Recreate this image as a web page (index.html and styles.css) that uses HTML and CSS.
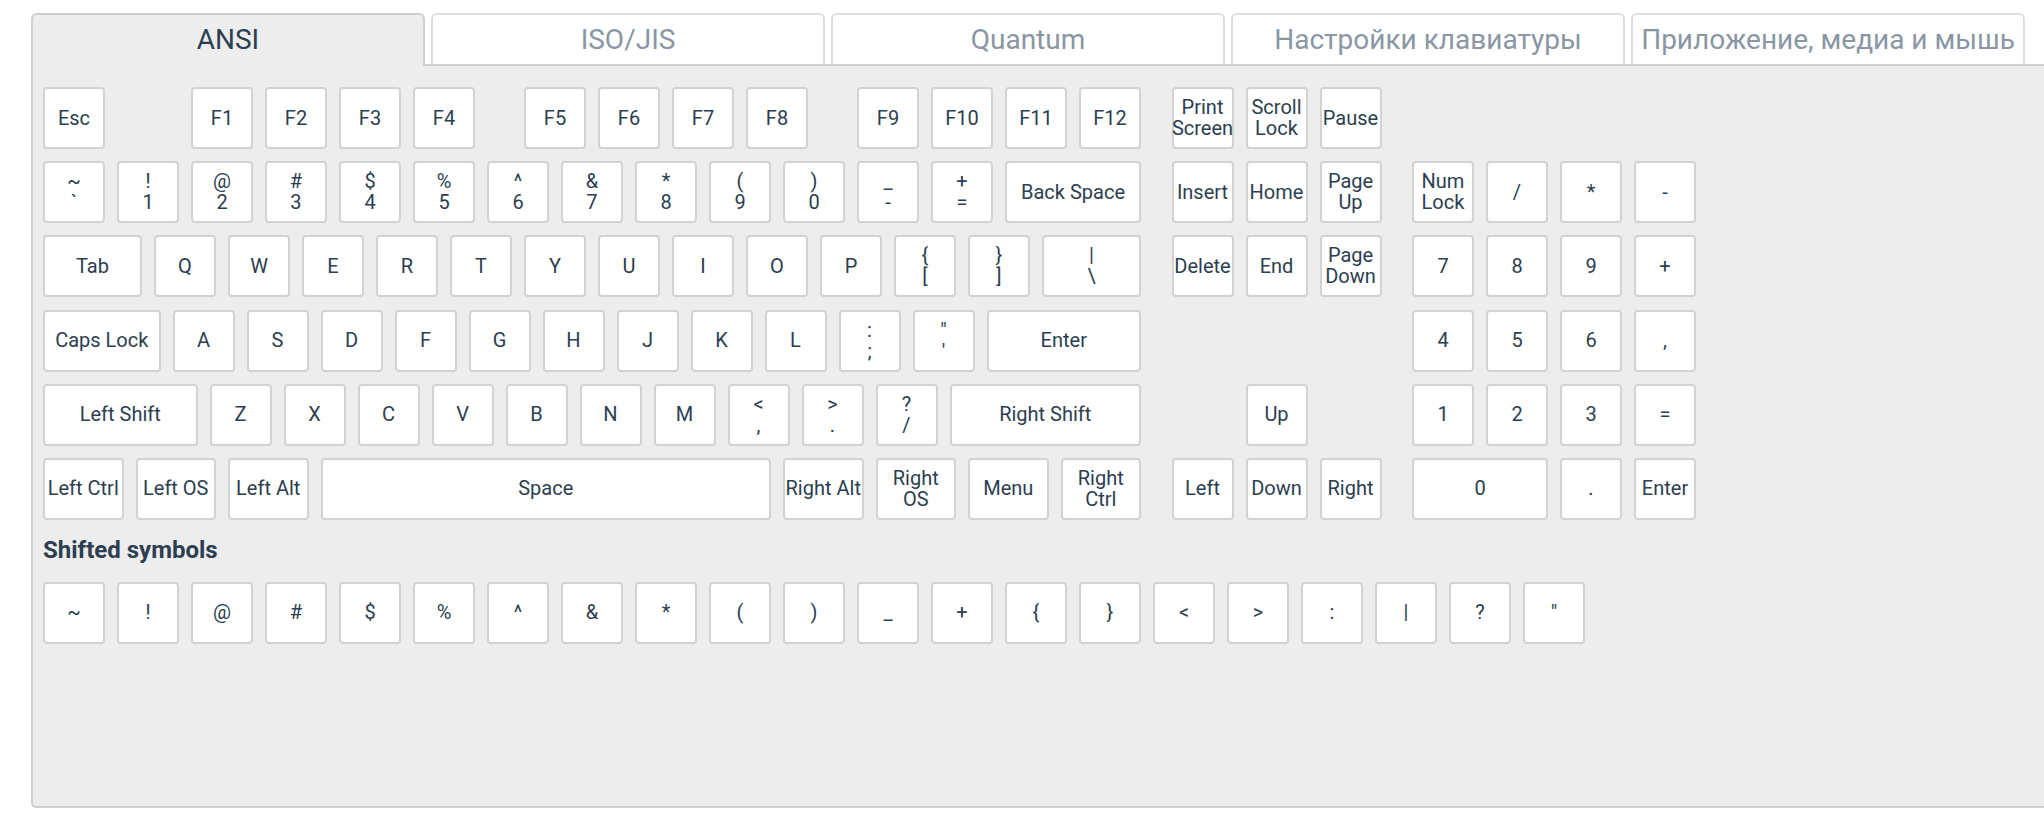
FILE: index.html
```
<!DOCTYPE html>
<html lang="en">
<head>
    <meta charset="UTF-8">
    <meta name="viewport" content="width=device-width, initial-scale=1.0">
    <title>Keycodes</title>
    <link rel="stylesheet" href="styles.css">
</head>
<body>

    <div class="keycodes">
        <!-- Tabs -->
        <div class="tabs">
            <div class="tab active">ANSI</div>
            <div class="tab">ISO/JIS</div>
            <div class="tab">Quantum</div>
            <div class="tab">Настройки клавиатуры</div>
            <div class="tab">Приложение, медиа и мышь</div>
        </div>

        <!-- Key panel -->
        <div class="panel">
            <div class="keyboard" id="keyboard">
                <!-- Rows are built from the layout below -->
            </div>

            <h3 class="section-title">Shifted symbols</h3>
            <div class="key-row" id="shifted"></div>
        </div>
    </div>

    <script>
        const UNIT = 74;
        const GAP = 12;

        // [label, x in units, width in units]
        const layout = [
            [['Esc', 0], ['F1', 2], ['F2', 3], ['F3', 4], ['F4', 5],
             ['F5', 6.5], ['F6', 7.5], ['F7', 8.5], ['F8', 9.5],
             ['F9', 11], ['F10', 12], ['F11', 13], ['F12', 14],
             ['Print\nScreen', 15.25], ['Scroll\nLock', 16.25], ['Pause', 17.25]],
            [['~\n`', 0], ['!\n1', 1], ['@\n2', 2], ['#\n3', 3], ['$\n4', 4], ['%\n5', 5],
             ['^\n6', 6], ['&\n7', 7], ['*\n8', 8], ['(\n9', 9], [')\n0', 10], ['_\n-', 11],
             ['+\n=', 12], ['Back Space', 13, 2],
             ['Insert', 15.25], ['Home', 16.25], ['Page\nUp', 17.25],
             ['Num\nLock', 18.5], ['/', 19.5], ['*', 20.5], ['-', 21.5]],
            [['Tab', 0, 1.5], ['Q', 1.5], ['W', 2.5], ['E', 3.5], ['R', 4.5], ['T', 5.5],
             ['Y', 6.5], ['U', 7.5], ['I', 8.5], ['O', 9.5], ['P', 10.5],
             ['{\n[', 11.5], ['}\n]', 12.5], ['|\n\\', 13.5, 1.5],
             ['Delete', 15.25], ['End', 16.25], ['Page\nDown', 17.25],
             ['7', 18.5], ['8', 19.5], ['9', 20.5], ['+', 21.5]],
            [['Caps Lock', 0, 1.75], ['A', 1.75], ['S', 2.75], ['D', 3.75], ['F', 4.75],
             ['G', 5.75], ['H', 6.75], ['J', 7.75], ['K', 8.75], ['L', 9.75],
             [':\n;', 10.75], ['"\n\'', 11.75], ['Enter', 12.75, 2.25],
             ['4', 18.5], ['5', 19.5], ['6', 20.5], [',', 21.5]],
            [['Left Shift', 0, 2.25], ['Z', 2.25], ['X', 3.25], ['C', 4.25], ['V', 5.25],
             ['B', 6.25], ['N', 7.25], ['M', 8.25],
             ['<\n,', 9.25], ['>\n.', 10.25], ['?\n/', 11.25], ['Right Shift', 12.25, 2.75],
             ['Up', 16.25],
             ['1', 18.5], ['2', 19.5], ['3', 20.5], ['=', 21.5]],
            [['Left Ctrl', 0, 1.25], ['Left OS', 1.25, 1.25], ['Left Alt', 2.5, 1.25],
             ['Space', 3.75, 6.25], ['Right Alt', 10, 1.25], ['Right\nOS', 11.25, 1.25],
             ['Menu', 12.5, 1.25], ['Right\nCtrl', 13.75, 1.25],
             ['Left', 15.25], ['Down', 16.25], ['Right', 17.25],
             ['0', 18.5, 2], ['.', 20.5], ['Enter', 21.5]]
        ];

        const shifted = '~ ! @ # $ % ^ & * ( ) _ + { } < > : | ? "'.split(' ');

        function makeKey(label, width, offset) {
            const key = document.createElement('div');
            key.classList.add('key');
            key.textContent = label;
            key.style.width = (width * UNIT - GAP) + 'px';
            if (offset > 0) key.style.marginLeft = (offset * UNIT) + 'px';
            return key;
        }

        const keyboard = document.getElementById('keyboard');
        layout.forEach(row => {
            const rowDiv = document.createElement('div');
            rowDiv.classList.add('key-row');
            let cursor = 0;
            row.forEach(([label, x, w = 1]) => {
                rowDiv.appendChild(makeKey(label, w, x - cursor));
                cursor = x + w;
            });
            keyboard.appendChild(rowDiv);
        });

        const shiftedRow = document.getElementById('shifted');
        shifted.forEach(sym => shiftedRow.appendChild(makeKey(sym, 1, 0)));
    </script>

</body>
</html>
```

FILE: styles.css
```
body {
    margin: 0;
    padding: 13px 0 0 0;
    background-color: #ffffff;
    color: #2c3e50;
    font-family: 'Roboto', 'Noto Sans', sans-serif;
    overflow: hidden;
}

.keycodes {
    margin-left: 31px;
}

/* Tabs */
.tabs {
    display: flex;
    align-items: flex-start;
    gap: 6px;
    margin-bottom: -2px;
    position: relative;
    z-index: 1;
}

.tab {
    box-sizing: border-box;
    flex: 0 0 394px;
    height: 51px;
    background-color: #ffffff;
    border: 2px solid #dedede;
    border-bottom: none;
    border-radius: 6px 6px 0 0;
    color: #8a96a3;
    font-size: 28px;
    line-height: 50px;
    text-align: center;
    white-space: nowrap;
    cursor: pointer;
}

.tab.active {
    height: 53px;
    background-color: #ededed;
    border-color: #cfcfcf;
    color: #2c3e50;
}

/* Panel */
.panel {
    box-sizing: border-box;
    height: 744px;
    background-color: #ededed;
    border: 2px solid #cfcfcf;
    border-right: none;
    border-radius: 0 0 0 5px;
    padding: 21px 0 0 10px;
}

.key-row {
    display: flex;
    margin-bottom: 12.2px;
}

.key {
    box-sizing: border-box;
    flex: 0 0 auto;
    height: 62px;
    margin-right: 12px;
    display: flex;
    align-items: center;
    justify-content: center;
    background-color: #ffffff;
    border: 2px solid #d2d2d2;
    border-radius: 4px;
    font-size: 20px;
    line-height: 21px;
    text-align: center;
    white-space: pre;
    cursor: pointer;
}

.section-title {
    margin: 16px 0 18px 0;
    font-size: 24px;
    line-height: 28px;
    font-weight: bold;
    color: #2c3e50;
}
```
